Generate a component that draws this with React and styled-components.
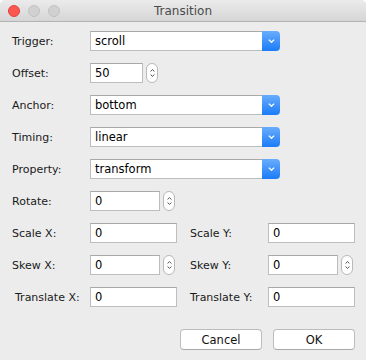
import React from "react";
import styled, { createGlobalStyle } from "styled-components";

const GlobalStyle = createGlobalStyle`
  html, body {
    margin: 0;
    padding: 0;
    background: #ffffff;
  }
  * {
    box-sizing: border-box;
  }
`;

const Window = styled.div`
  width: 366px;
  height: 360px;
  background: #ececec;
  border-radius: 5px 5px 0 0;
  overflow: hidden;
  font-family: "DejaVu Sans", sans-serif;
  font-size: 11px;
  color: #1a1a1a;
  display: flex;
  flex-direction: column;
`;

const TitleBar = styled.div`
  height: 22px;
  flex: none;
  display: flex;
  align-items: center;
  position: relative;
  background: linear-gradient(#ebebeb, #d6d6d6);
  border-bottom: 1px solid #b3b3b3;
`;

const Lights = styled.div`
  display: flex;
  gap: 8px;
  padding-left: 8px;
`;

const Light = styled.span`
  width: 12px;
  height: 12px;
  border-radius: 50%;
  background: ${(p) => (p.$red ? "#fc5852" : "#d1d1d1")};
  border: 1px solid ${(p) => (p.$red ? "#e0443e" : "#c1c1c1")};
`;

const Title = styled.div`
  position: absolute;
  left: 0;
  right: 0;
  text-align: center;
  font-size: 12px;
  color: #4a4a4a;
  pointer-events: none;
`;

const Content = styled.div`
  padding-top: 9px;
  display: flex;
  flex-direction: column;
  gap: 12px;
`;

const Row = styled.div`
  display: flex;
  align-items: center;
  height: 20px;
`;

const Cell = styled.div`
  display: flex;
  align-items: center;
  width: ${(p) => p.$width || "auto"};
  padding-left: ${(p) => p.$pad || "0"};
`;

const Label = styled.label`
  width: ${(p) => (p.$indent ? "75px" : "78px")};
  margin-left: ${(p) => (p.$indent ? "3px" : "0")};
  flex: none;
`;

const Field = styled.div`
  height: 20px;
  width: ${(p) => p.$w}px;
  background: #fff;
  border: 1px solid #bdbdbd;
  border-top-color: #a9a9a9;
  display: flex;
  align-items: center;
  padding-left: 4px;
  font-size: 11.5px;
  color: #000;
`;

const Select = styled.div`
  height: 20px;
  width: 190px;
  display: flex;
`;

const SelectValue = styled.div`
  flex: 1;
  background: #fff;
  border: 1px solid #bdbdbd;
  border-top-color: #a9a9a9;
  border-right: none;
  display: flex;
  align-items: center;
  padding-left: 4px;
  font-size: 11.5px;
  color: #000;
`;

const SelectButton = styled.div`
  width: 18px;
  border-radius: 0 4px 4px 0;
  background: linear-gradient(#68adfc, #1b7cf7);
  display: flex;
  align-items: center;
  justify-content: center;
`;

const Stepper = styled.div`
  width: 12px;
  height: 20px;
  margin-left: 3px;
  background: #fff;
  border: 1px solid #b9b9b9;
  border-radius: 6px;
  display: flex;
  flex-direction: column;
  align-items: center;
  justify-content: center;
  gap: 2px;
`;

const Buttons = styled.div`
  display: flex;
  justify-content: flex-end;
  gap: 11px;
  padding-right: 11px;
  margin-top: 10px;
`;

const Button = styled.button`
  width: 82px;
  height: 21px;
  background: #fff;
  border: 1px solid #bcbcbc;
  border-bottom-color: #a8a8a8;
  border-radius: 4px;
  font-family: "DejaVu Sans", sans-serif;
  font-size: 11.5px;
  color: #111;
  padding: 0;
`;

const Chevron = ({ up, color = "#fff", w = 7, h = 4 }) => (
  <svg width={w} height={h} viewBox="0 0 7 4">
    <path
      d={up ? "M0.8 3.4 L3.5 0.8 L6.2 3.4" : "M0.8 0.6 L3.5 3.2 L6.2 0.6"}
      fill="none"
      stroke={color}
      strokeWidth="1.3"
    />
  </svg>
);

const Dropdown = ({ value }) => (
  <Select>
    <SelectValue>{value}</SelectValue>
    <SelectButton>
      <Chevron />
    </SelectButton>
  </Select>
);

const Spin = () => (
  <Stepper>
    <Chevron up color="#444" w={5} h={3} />
    <Chevron color="#444" w={5} h={3} />
  </Stepper>
);

export default function App() {
  return (
    <>
      <GlobalStyle />
      <Window>
        <TitleBar>
          <Lights>
            <Light $red />
            <Light />
            <Light />
          </Lights>
          <Title>Transition</Title>
        </TitleBar>
        <Content>
          <Row>
            <Cell $pad="12px">
              <Label>Trigger:</Label>
              <Dropdown value="scroll" />
            </Cell>
          </Row>
          <Row>
            <Cell $pad="12px">
              <Label>Offset:</Label>
              <Field $w={53}>50</Field>
              <Spin />
            </Cell>
          </Row>
          <Row>
            <Cell $pad="12px">
              <Label>Anchor:</Label>
              <Dropdown value="bottom" />
            </Cell>
          </Row>
          <Row>
            <Cell $pad="12px">
              <Label>Timing:</Label>
              <Dropdown value="linear" />
            </Cell>
          </Row>
          <Row>
            <Cell $pad="12px">
              <Label>Property:</Label>
              <Dropdown value="transform" />
            </Cell>
          </Row>
          <Row>
            <Cell $pad="12px">
              <Label>Rotate:</Label>
              <Field $w={70}>0</Field>
              <Spin />
            </Cell>
          </Row>
          <Row>
            <Cell $pad="12px" $width="190px">
              <Label>Scale X:</Label>
              <Field $w={87}>0</Field>
            </Cell>
            <Cell>
              <Label>Scale Y:</Label>
              <Field $w={87}>0</Field>
            </Cell>
          </Row>
          <Row>
            <Cell $pad="12px" $width="190px">
              <Label>Skew X:</Label>
              <Field $w={70}>0</Field>
              <Spin />
            </Cell>
            <Cell>
              <Label>Skew Y:</Label>
              <Field $w={70}>0</Field>
              <Spin />
            </Cell>
          </Row>
          <Row>
            <Cell $pad="12px" $width="190px">
              <Label $indent>Translate X:</Label>
              <Field $w={87}>0</Field>
            </Cell>
            <Cell>
              <Label>Translate Y:</Label>
              <Field $w={87}>0</Field>
            </Cell>
          </Row>
          <Buttons>
            <Button>Cancel</Button>
            <Button>OK</Button>
          </Buttons>
        </Content>
      </Window>
    </>
  );
}
